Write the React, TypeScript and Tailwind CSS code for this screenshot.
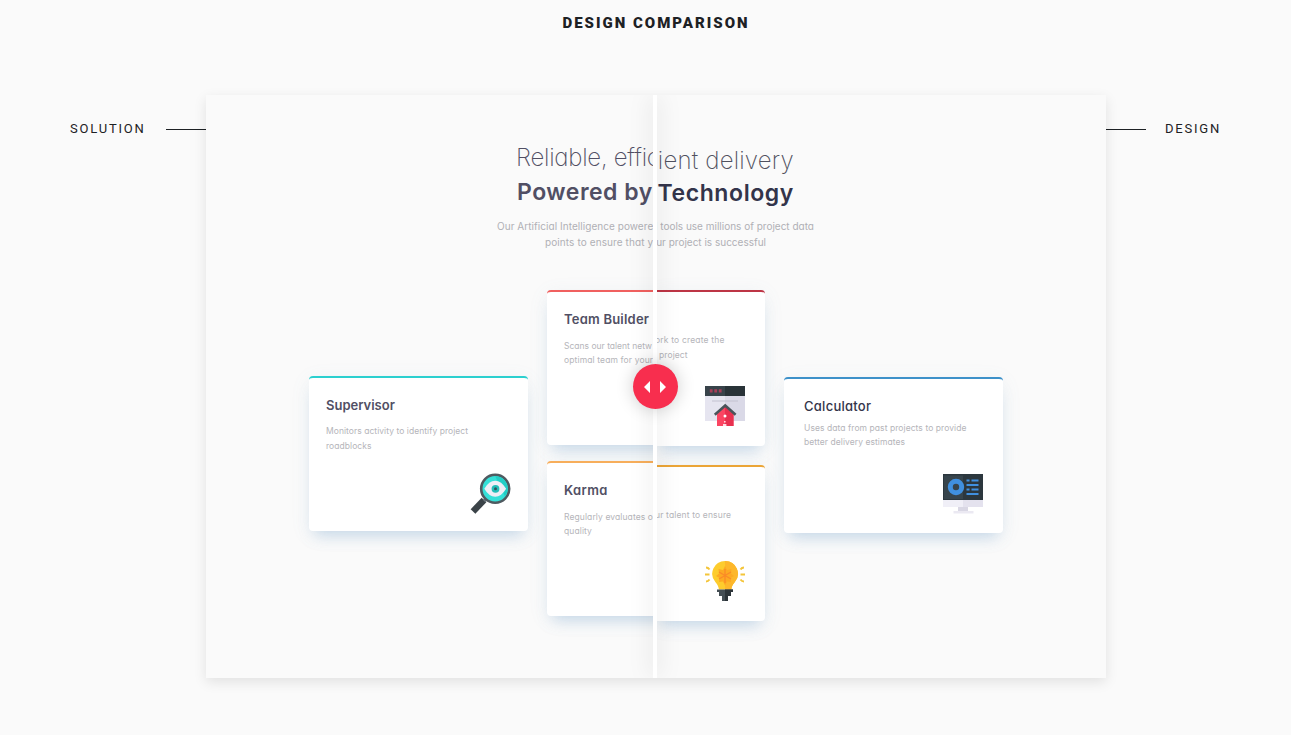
import type { ReactNode } from "react";

function MagnifierIcon() {
  return (
    <svg viewBox="0 0 42 42" className="h-[42px] w-[42px]">
      <path d="M3 38.500 L14 27" stroke="#3b4348" strokeWidth="6.5" />
      <path d="M14 28 L18 24" stroke="#6a757b" strokeWidth="3.500" />
      <circle cx="25.2" cy="15.800" r="14" fill="#35e0d8" stroke="#4f5a60" strokeWidth="2.6" />
      <path d="M25.2 3.300 A12.5 12.5 0 0 1 35 23.500 Z" fill="#22cec6" />
      <path d="M14.3 15.800 Q19 7.800 25.2 7.800 T36.1 15.800 Q31.4 23.800 25.2 23.800 T14.3 15.800Z" fill="#eeeef6" />
      <circle cx="25.5" cy="15.800" r="3.9" fill="#22bdb8" />
      <circle cx="25.5" cy="15.800" r="1.5" fill="#33525a" />
    </svg>
  );
}

function BrowserHomeIcon() {
  return (
    <svg viewBox="0 0 40 40" className="h-10 w-10">
      <path d="M0 8h40v27H0z" fill="#e6e5f0" />
      <path d="M20 8h20v27H20z" fill="#dad9e7" />
      <path d="M0 0h40v10H0z" fill="#293338" />
      <path d="M0 0h20v10H0z" fill="#38434a" />
      <path d="M4.800 3.200h2.800v3.400H4.800zM9.300 3.200h2.800v3.400H9.300zM13.800 3.200h2.800v3.400h-2.800z" fill="#a63e57" />
      <path d="M7 15h26" stroke="#c3c2d0" strokeWidth="1" />
      <path d="M12 28 L20 20.5 L28.5 28 V40 H12Z" fill="#fb4562" />
      <path d="M20 20.5 L28.5 28 V40 H20Z" fill="#e8304f" />
      <path d="M9.8 28.8 L20.2 19.6 L30.6 28.8" fill="none" stroke="#4a545a" strokeWidth="2.6" />
      <circle cx="20" cy="30" r="1.5" fill="#fff" />
      <path d="M19 35h1.6v1.5H19zM18 38h3.4v2H18z" fill="#ffdce3" />
    </svg>
  );
}

function BulbIcon() {
  return (
    <svg viewBox="0 0 40 40" className="h-10 w-10">
      <path d="M20 0a12.8 12.8 0 0 0-9.5 21.3c2.2 2.5 3 4.2 3.4 7.2h12.4c.4-3 1.200-4.700 3.400-7.200A12.800 12.800 0 0 0 20 0z" fill="#fdcc2d" />
      <path d="M20 0v28.500h6.300c.4-3 1.200-4.700 3.400-7.200A12.800 12.800 0 0 0 20 0z" fill="#fdb72b" />
      <path d="M20 5l2 4 4.500-1-.5 4.500 3 2.500-3.500 2 .5 4-4-.5-2 4-2-4-4 .5.5-4-3.500-2 3-2.500-.5-4.500 4.500 1z" fill="#fdaa22" />
      <path d="M20 8v14M14 11l12 7M26 11l-12 7" stroke="#fb8a28" strokeWidth="1.300" />
      <path d="M4.500 8.500C3.500 7 2.500 6.500 1 6.500M4.500 13.500H0M4.500 18.500C3.500 20 2.500 20.500 1 20.500M35.500 8.500c1-1.500 2-2 3.500-2M35.500 13.500H40M35.500 18.500c1 1.500 2 2 3.500 2" fill="none" stroke="#f4c53a" strokeWidth="2" />
      <path d="M12 28.500h16v2.500H12zM14 31h12v4H14zM17 35h6v5h-6z" fill="#444e54" />
      <path d="M20 28.500h8v2.500h-2v4h-3v5h-3z" fill="#2c3439" />
    </svg>
  );
}

function MonitorIcon() {
  return (
    <svg viewBox="0 0 40 41" className="h-[41px] w-10">
      <path d="M0 24h40v9H0z" fill="#f0eff7" />
      <path d="M20 24h20v9H20z" fill="#e4e2ee" />
      <path d="M15 33h10v4H15z" fill="#d9d7e4" />
      <path d="M10.500 37h20v2.500h-20z" fill="#ebe9f2" />
      <path d="M0 0h40v26H0z" fill="#2c373e" />
      <path d="M1 1.500h19V25H1z" fill="#37444c" />
      <circle cx="13" cy="13" r="5.700" fill="none" stroke="#4090e0" strokeWidth="5" />
      <path d="M23.500 6.500h3M28.500 6.500h7M23.500 11h12M23.500 15.500h3M28.500 15.500h7M23.500 20h12" stroke="#4090e0" strokeWidth="2.200" />
    </svg>
  );
}

function Card({ className, children }: { className: string; children: ReactNode }) {
  return (
    <div
      className={`flex shrink-0 flex-col whitespace-nowrap border-t-2 bg-white shadow-[0_10px_14px_-6px_rgba(115,160,205,0.34),0_4px_20px_rgba(115,150,190,0.09)] ${className}`}
    >
      {children}
    </div>
  );
}

function SolutionPane() {
  return (
    <div className="flex h-full w-[449px] shrink-0 flex-col overflow-hidden whitespace-nowrap text-[#514f64]">
      <div className="flex flex-col pt-[46px]">
        <p className="pl-[310px] text-[24px] leading-[34px] font-extralight tracking-[-0.25px]">Reliable, effic</p>
        <p className="pl-[311px] text-[23px] leading-[34px] font-semibold tracking-[0.5px]">Powered by</p>
        <p className="mt-[10px] pl-[291px] text-[10px] leading-[15.5px] tracking-[0.05px] text-[#b0b0b5]">Our Artificial Intelligence powered</p>
        <p className="pl-[339px] text-[10px] leading-[15.5px] tracking-[0.1px] text-[#b0b0b5]">points to ensure that yo</p>
      </div>
      <div className="mt-[40px] flex pl-[103px]">
        <Card className="mt-[86px] h-[155px] w-[219px] rounded-[4px] border-[#2cd0cf] pl-[17px]">
          <h3 className="mt-[17px] text-[13px] leading-5 font-semibold">Supervisor</h3>
          <p className="mt-[9px] text-[8.5px] leading-[14.5px] tracking-[0.051px] text-[#b5b5ba]">
            Monitors activity to identify project
            <br />
            roadblocks
          </p>
          <div className="mt-auto mr-[16px] mb-[16px] self-end">
            <MagnifierIcon />
          </div>
        </Card>
        <div className="ml-[19px] flex flex-col gap-4">
          <Card className="h-[155px] w-[219px] rounded-[4px] border-[#f0605f] pl-[17px]">
            <h3 className="mt-[17px] text-[13px] leading-5 font-semibold tracking-[0.214px]">Team Builder</h3>
            <p className="mt-[10px] text-[8.5px] leading-[14px] text-[#b5b5ba]">
              Scans our talent netw
              <br />
              <span className="tracking-[0.127px]">optimal team for your</span>
            </p>
          </Card>
          <Card className="h-[155px] w-[219px] rounded-[4px] border-[#f7ae5b] pl-[17px]">
            <h3 className="mt-[17px] text-[13px] leading-5 font-semibold tracking-[0.4px]">Karma</h3>
            <p className="mt-[10px] text-[8.5px] leading-[14px] tracking-[0.1px] text-[#b5b5ba]">
              Regularly evaluates o
              <br />
              quality
            </p>
          </Card>
        </div>
      </div>
    </div>
  );
}

function DesignPane() {
  return (
    <div className="flex h-full w-[451px] shrink-0 flex-col overflow-hidden whitespace-nowrap text-[#33344a]">
      <div className="flex flex-col items-end pt-[50px]">
        <p className="pr-[312px] text-[24px] leading-[32px] font-extralight tracking-[0.2px] text-[#50515f]">cient delivery</p>
        <p className="pr-[312px] text-[23px] leading-[32px] font-semibold tracking-[0.6px]">Technology</p>
        <p className="mt-[10px] pr-[292px] text-[10px] leading-[15.5px] text-[#b0b0b5]">d tools use millions of project data</p>
        <p className="pr-[340px] text-[10px] leading-[15.5px] text-[#b0b0b5]">our project is successful</p>
      </div>
      <div className="mt-[40px] flex gap-[19px]">
        <div className="flex flex-col gap-[19px]">
          <Card className="h-[156px] w-[110px] rounded-r-[4px] border-[#bd3545]">
            <p className="mt-[41px] pr-[43px] text-right text-[8.5px] leading-[14.5px] tracking-[0.18px] text-[#b5b5ba]">ork to create the</p>
            <p className="pl-1 text-[8.5px] leading-[14.5px] tracking-[0.1px] text-[#b5b5ba]">project</p>
            <div className="mt-auto mr-5 mb-5 self-end">
              <BrowserHomeIcon />
            </div>
          </Card>
          <Card className="h-[156px] w-[110px] rounded-r-[4px] border-[#eba537]">
            <p className="mt-[41px] pr-[36px] text-right text-[8.5px] leading-[14.5px] tracking-[0.146px] text-[#b5b5ba]">ur talent to ensure</p>
            <div className="mt-auto mr-5 mb-5 self-end">
              <BulbIcon />
            </div>
          </Card>
        </div>
        <Card className="mt-[87px] h-[156px] w-[219px] rounded-[4px] border-[#3d91c9] pl-5">
          <h3 className="mt-[17px] text-[13px] leading-5 font-medium tracking-[0.26px]">Calculator</h3>
          <p className="mt-[5px] text-[8.5px] leading-[14px] tracking-[0.07px] text-[#b5b5ba]">
            Uses data from past projects to provide
            <br />
            better delivery estimates
          </p>
          <div className="mt-auto mr-5 mb-[18px] self-end">
            <MonitorIcon />
          </div>
        </Card>
      </div>
    </div>
  );
}

function Handle() {
  return (
    <div className="absolute inset-y-0 left-[447px] flex w-1 items-center justify-center bg-white shadow-[0_0_22px_rgba(0,0,0,0.22)]">
      <button
        aria-label="Drag to compare"
        className="flex h-[45px] w-[45px] shrink-0 items-center justify-center rounded-full bg-[#f82e4e] shadow-[0_0_18px_rgba(0,0,0,0.2)]"
      >
        <svg viewBox="0 0 22 12" className="h-3 w-[22px] shrink-0 fill-white">
          <path d="M6 0v12L0 6z M16 0v12l6-6z" />
        </svg>
      </button>
    </div>
  );
}

export default function App() {
  return (
    <main className="h-[735px] w-full overflow-hidden bg-[#fafafa] font-[Roboto,sans-serif] text-[#1d2124]">
      <h1 className="pt-[12px] pl-[21px] text-center text-[15px] leading-[22px] font-black tracking-[2px]">DESIGN COMPARISON</h1>
      <div className="mt-[61px] flex items-start">
        <div className="flex w-[206px] items-center justify-between pt-[24px]">
          <span className="pl-[70px] text-[13px] leading-5 tracking-[1.8px]">SOLUTION</span>
          <span className="h-px w-10 bg-[#1d2124]" />
        </div>
        <section className="relative flex h-[583px] w-[900px] shrink-0 overflow-hidden bg-[#fafafa] font-[Inter,sans-serif] [font-feature-settings:'cv11'] shadow-[0_4px_12px_rgba(0,0,0,0.1)]">
          <SolutionPane />
          <DesignPane />
          <Handle />
        </section>
        <div className="flex items-center pt-[24px]">
          <span className="h-px w-10 bg-[#1d2124]" />
          <span className="pl-[19px] text-[13px] leading-5 tracking-[1.8px]">DESIGN</span>
        </div>
      </div>
    </main>
  );
}
